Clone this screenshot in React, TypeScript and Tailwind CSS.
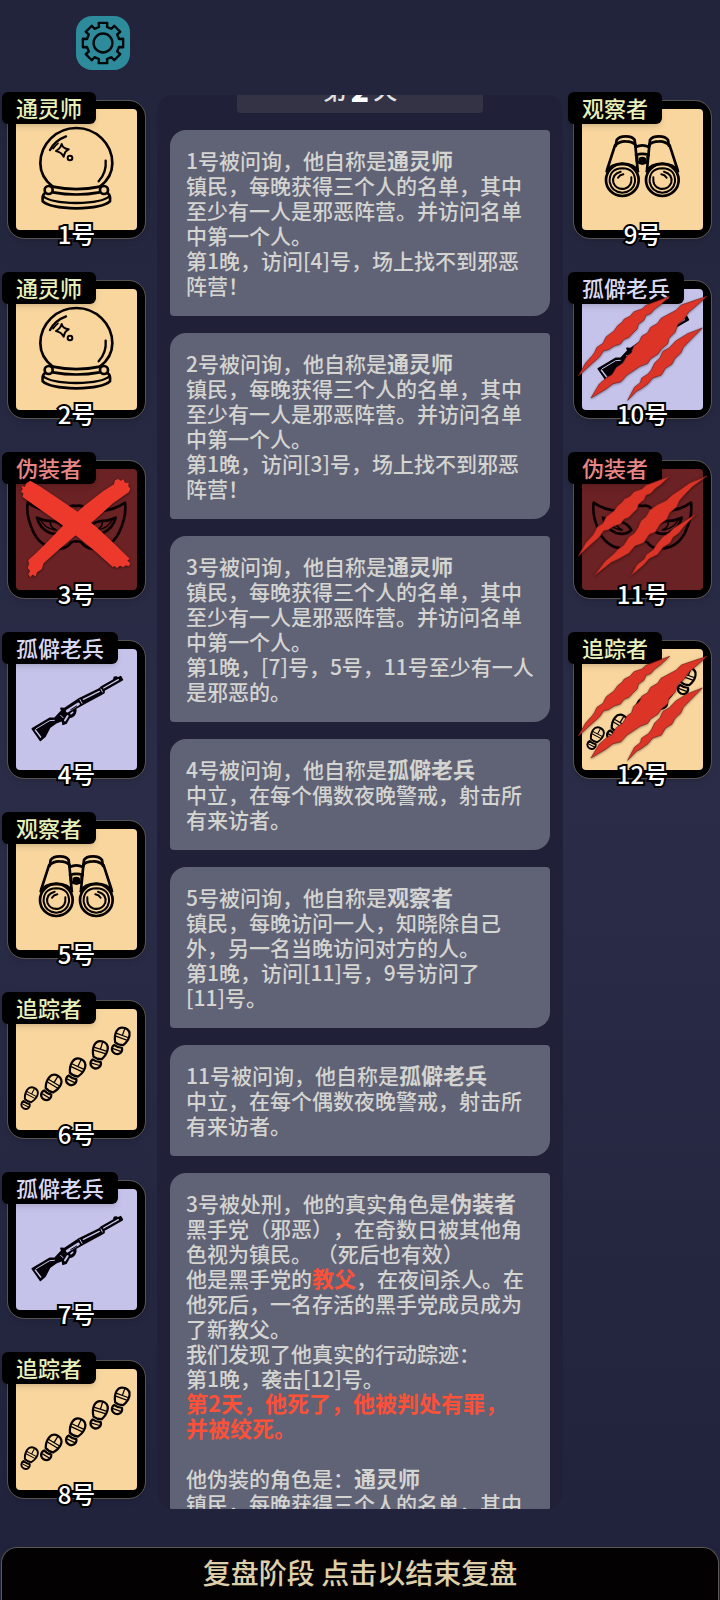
import type { ReactNode } from "react";
import clsx from "clsx";

type Role = "medium" | "disguiser" | "veteran" | "watcher" | "tracker";
type Mark = "executed" | "clawed" | "clawedLow";

type Player = {
  seat: number;
  role: Role;
  mark?: Mark;
};

const ROLES: Record<Role, { name: string; label: string; tile: string }> = {
  medium: { name: "通灵师", label: "text-[#e9efb9]", tile: "bg-[#f8d69e]" },
  disguiser: { name: "伪装者", label: "text-[#e88585]", tile: "bg-[#6a2224]" },
  veteran: { name: "孤僻老兵", label: "text-[#d9d8f3]", tile: "bg-[#c5c3ea]" },
  watcher: { name: "观察者", label: "text-[#e9efb9]", tile: "bg-[#f8d69e]" },
  tracker: { name: "追踪者", label: "text-[#e9efb9]", tile: "bg-[#f8d69e]" },
};

const LEFT: Player[] = [
  { seat: 1, role: "medium" },
  { seat: 2, role: "medium" },
  { seat: 3, role: "disguiser", mark: "executed" },
  { seat: 4, role: "veteran" },
  { seat: 5, role: "watcher" },
  { seat: 6, role: "tracker" },
  { seat: 7, role: "veteran" },
  { seat: 8, role: "tracker" },
];

const RIGHT: Player[] = [
  { seat: 9, role: "watcher" },
  { seat: 10, role: "veteran", mark: "clawed" },
  { seat: 11, role: "disguiser", mark: "clawedLow" },
  { seat: 12, role: "tracker", mark: "clawed" },
];

const MEDIUM_TEXT =
  "镇民，每晚获得三个人的名单，其中至少有一人是邪恶阵营。并访问名单中第一个人。";

function CrystalBall() {
  return (
    <g fill="none" stroke="#050000" strokeWidth={8} strokeLinecap="round" strokeLinejoin="round">
      <path d="M159 290 C136 272 122 248 122 220 A108 106 0 0 1 338 220 C338 248 324 272 301 290" />
      <path d="M159 290 Q230 305 301 290" />
      <path d="M160 307 Q230 320 300 307" />
      <circle cx={147} cy={300} r={12} />
      <circle cx={313} cy={300} r={12} />
      <path d="M135 310 Q127 316 129 334 Q150 354 230 355 Q310 354 331 334 Q333 316 325 310" />
      <path strokeWidth={7} d="M130 318 Q150 338 230 339 Q310 338 330 318" />
      <path strokeWidth={7} d="M151 180 Q165 152 199 139" />
      <path strokeWidth={5} d="M160 176 Q166 167 175 160" />
      <path strokeWidth={7} d="M318 212 Q321 248 297 274" />
      <path
        strokeWidth={6}
        d="M186 162 Q189 171 193 173 Q199 177 207 178 Q200 182 197 186 Q194 192 192 200 Q187 192 183 189 Q177 185 169 183 Q177 178 180 174 Q184 169 186 162 Z"
      />
      <circle cx={211} cy={204} r={7} strokeWidth={6} />
    </g>
  );
}

function BinocularHalf() {
  return (
    <>
      <path d="M150 168 L153 150 Q160 139 180 139 Q201 139 207 150 L209 168" />
      <path d="M149 166 Q162 153 180 154 Q200 154 209 164" />
      <path d="M148 166 L124 240 M209 166 L216 240" />
      <path d="M123 244 Q136 222 170 221 Q206 222 217 244" />
      <ellipse cx={170} cy={270} rx={49} ry={48} />
      <path strokeWidth={6} d="M132 276 Q130 236 170 235 Q210 236 208 276 Q202 306 170 308 Q138 306 132 276" />
      <path strokeWidth={6} d="M197 262 Q200 290 177 296 Q152 300 143 278 Q138 252 165 245 M157 263 Q162 255 173 253" />
    </>
  );
}

function Binoculars() {
  return (
    <g fill="none" stroke="#050000" strokeWidth={8} strokeLinecap="round" strokeLinejoin="round">
      <BinocularHalf />
      <g transform="translate(460 0) scale(-1 1)">
        <BinocularHalf />
      </g>
      <path d="M210 171 Q230 161 250 171 M211 195 Q230 188 249 195 M214 197 V214 Q230 228 246 214 V197" />
      <ellipse cx={230} cy={209} rx={9} ry={6} fill="#050000" strokeWidth={5} />
    </g>
  );
}

function Shotgun() {
  return (
    <g strokeLinecap="round" strokeLinejoin="round">
      <path
        fill="#050008"
        stroke="#050008"
        strokeWidth={5}
        d="M98 296 L151 265 L166 264 L187 242 L184 235 L194 236 L236 208 L299 177 L304 172 L342 150 L344 142 L351 141 L353 145 L363 140 L368 149 L313 181 L313 188 L305 193 L252 221 L228 235 L228 244 Q226 259 209 262 L199 280 L190 283 L188 271 L168 279 L150 292 L136 319 L122 331 Z"
      />
      <g fill="none" stroke="#c5c3ea" strokeWidth={4}>
        <path d="M107 300 L123 321" />
        <path strokeWidth={3} d="M110 296 L150 272 L164 271" />
        <path strokeWidth={9} d="M203 243 L236 222" />
        <path d="M251 208 L299 184 M312 174 L356 149" />
        <path strokeWidth={3} d="M241 209 L247 220 M304 177 L308 186 M183 256 L190 263" />
        <path strokeWidth={6} d="M196 271 L204 258" />
        <path strokeWidth={5} d="M214 251 L219 247" />
      </g>
      <path stroke="#050008" strokeWidth={3} d="M213 239 L231 228" />
    </g>
  );
}

const STEPS = [
  { x: 88, y: 325, angle: 28, size: 0.8 },
  { x: 153, y: 293, angle: 31, size: 0.95 },
  { x: 226, y: 246, angle: 25, size: 0.97 },
  { x: 296, y: 195, angle: 17, size: 0.97 },
  { x: 361, y: 153, angle: 20, size: 0.95 },
];

function Footprints() {
  return (
    <g fill="none" stroke="#050000" strokeWidth={7} strokeLinecap="round" strokeLinejoin="round">
      {STEPS.map((step) => (
        <g key={step.x} transform={`translate(${step.x} ${step.y}) rotate(${step.angle}) scale(${step.size})`}>
          <path d="M-13 9 C-25 -12 -27 -43 1 -44 C28 -43 27 -12 14 9 Q0 14 -13 9 Z" />
          <path d="M-13 18 Q0 23 13 18 C20 28 15 42 0 43 C-15 42 -20 28 -13 18 Z" />
          <path strokeWidth={4} d="M-18 -19 H20 M-18 -10 H19 M-12 30 H13 M1 -43 V-20" />
        </g>
      ))}
    </g>
  );
}

function MaskHalf() {
  return (
    <>
      <path d="M230 168 Q213 164 200 178 Q186 193 158 182 Q116 181 84 158 Q78 197 102 248 Q127 297 181 296 Q203 294 214 278 Q222 273 230 274" />
      <path d="M112 203 Q134 213 156 213 Q186 218 197 240 Q181 257 151 249 Q120 236 112 203 Z" />
      <path strokeWidth={5} d="M121 207 Q134 234 165 240 M152 215 Q150 232 170 240" />
    </>
  );
}

function Mask() {
  return (
    <g fill="none" stroke="#0d0203" strokeWidth={8} strokeLinecap="round" strokeLinejoin="round">
      <MaskHalf />
      <g transform="translate(460 0) scale(-1 1)">
        <MaskHalf />
      </g>
    </g>
  );
}

function RedCross() {
  return (
    <g fill="#ec392c" className="drop-shadow-[0_2px_3px_rgba(0,0,0,0.6)]">
      <path d="M92 92 L125 112 L170 142 L235 186 L291 232 L341 278 L390 326 L383 332 L392 340 L387 349 L378 346 L371 352 L361 347 L352 354 L344 348 L340 352 L290 307 L235 262 L175 216 L110 170 L69 141 L71 130 L64 126 L69 117 L65 108 L76 110 L80 100 Z" />
      <path d="M355 87 L364 92 L371 88 L376 98 L387 98 L386 109 L392 116 L388 126 L340 160 L288 207 L228 256 L172 304 L132 340 L126 358 L112 367 L108 379 L98 374 L92 382 L86 373 L91 363 L84 354 L88 343 L86 330 L104 314 L140 279 L203 214 L252 169 L310 124 L343 103 L346 91 Z" />
    </g>
  );
}

function Claws({ low }: { low?: boolean }) {
  return (
    <g
      fill="#dc3427"
      stroke="#81201c"
      strokeWidth={2}
      strokeLinejoin="round"
      className="drop-shadow-[0_2px_3px_rgba(0,0,0,0.5)]"
    >
      <path d="M38 318 L60 279 L80 257 L87 247 L94 232 L112 220 L122 200 L145 183 L156 167 L169 157 L176 147 L193 139 L205 125 L229 117 L241 106 L262 98 L312 79 L287 102 L266 118 L256 130 L241 136 L235 150 L218 163 L215 176 L201 190 L190 202 L175 208 L164 222 L145 228 L128 239 L114 242 L101 261 L75 284 Z" />
      {low ? (
        <>
          <path d="M86 377 L119 333 L143 313 L157 298 L174 286 L190 261 L207 249 L218 231 L226 212 L241 200 L252 181 L275 164 L301 152 L321 134 L348 116 L372 99 L424 78 L380 110 L354 137 L341 152 L333 171 L312 188 L304 207 L283 223 L269 246 L251 253 L234 278 L208 288 L189 310 L160 326 L137 337 Z" />
          <path d="M196 377 L214 344 L235 328 L243 313 L263 299 L273 282 L292 260 L310 249 L324 235 L394 190 L354 230 L340 249 L322 262 L313 279 L293 291 L275 314 L250 326 L234 345 Z" />
        </>
      ) : (
        <>
          <path d="M76 384 L101 342 L123 323 L139 314 L152 293 L171 280 L184 258 L198 248 L204 229 L221 215 L228 199 L246 188 L255 172 L276 160 L286 145 L310 132 L331 121 L347 105 L373 96 L424 79 L384 114 L368 127 L356 147 L337 163 L328 187 L310 205 L306 221 L288 236 L277 252 L255 266 L246 280 L223 289 L202 303 L184 315 L166 335 L142 341 L121 357 Z" />
          <path d="M186 391 L207 351 L224 338 L228 324 L247 312 L257 300 L267 279 L283 263 L292 244 L311 233 L330 213 L366 191 L410 174 L369 215 L353 232 L346 248 L328 265 L319 282 L299 295 L287 315 L261 324 L247 341 L225 357 L213 363 Z" />
        </>
      )}
    </g>
  );
}

const ICONS: Record<Role, ReactNode> = {
  medium: <CrystalBall />,
  disguiser: <Mask />,
  veteran: <Shotgun />,
  watcher: <Binoculars />,
  tracker: <Footprints />,
};

function CardLayer({ children }: { children: ReactNode }) {
  return (
    <svg viewBox="25 33 411 411" className="absolute -inset-2 size-[137px] overflow-visible" aria-hidden="true">
      {children}
    </svg>
  );
}

function PlayerCard({ player }: { player: Player }) {
  const role = ROLES[player.role];
  return (
    <button
      type="button"
      className="relative block size-[137px] rounded-2xl border-8 border-black bg-black shadow-md outline outline-[#57534f]"
    >
      <span className={clsx("block size-full rounded-sm", role.tile)} />
      <CardLayer>{ICONS[player.role]}</CardLayer>
      <span
        className={clsx(
          "absolute -top-[17px] -left-[14px] rounded-md bg-black px-[14px] pb-0.5 text-[22px] leading-[30px] font-medium whitespace-nowrap shadow-md",
          role.label,
        )}
      >
        {role.name}
      </span>
      {player.mark && (
        <CardLayer>
          {player.mark === "executed" ? <RedCross /> : <Claws low={player.mark === "clawedLow"} />}
        </CardLayer>
      )}
      <span className="absolute inset-x-0 -bottom-5 text-center text-2xl leading-8 font-medium text-white [-webkit-text-stroke:4px_#000] [paint-order:stroke_fill]">
        {player.seat}号
      </span>
    </button>
  );
}

function PlayerColumn({ players, className }: { players: Player[]; className: string }) {
  return (
    <ul className={clsx("flex w-[157px] shrink-0 flex-col gap-[43px] pt-1.5", className)}>
      {players.map((player) => (
        <li key={player.seat}>
          <PlayerCard player={player} />
        </li>
      ))}
    </ul>
  );
}

function Strong({ children }: { children: ReactNode }) {
  return <strong className="text-[22px] leading-none font-bold">{children}</strong>;
}

function Danger({ children }: { children: ReactNode }) {
  return <strong className="text-[22px] leading-none font-bold text-[#fb5138]">{children}</strong>;
}

function Message({ children }: { children: ReactNode }) {
  return (
    <article className="shrink-0 rounded-tl-2xl rounded-tr-sm rounded-br-2xl rounded-bl-sm bg-[#606276] px-4 py-[18px] text-[21px] leading-[25px] font-medium text-[#d4d4d0]">
      {children}
    </article>
  );
}

// Eight square teeth around the hub.
function gearPath() {
  const points: string[] = [];
  for (let i = 0; i < 8; i++) {
    const teeth = [
      [-14, 49],
      [-12, 61],
      [12, 61],
      [14, 49],
    ];
    for (const [offset, radius] of teeth) {
      const angle = ((i * 45 + offset) * Math.PI) / 180;
      points.push(`${(80 + radius * Math.sin(angle)).toFixed(1)} ${(80 - radius * Math.cos(angle)).toFixed(1)}`);
    }
  }
  return `M${points.join(" L")} Z`;
}

function SettingsButton() {
  return (
    <button type="button" aria-label="设置" className="size-[54px] rounded-2xl bg-[#2d8b9b]">
      <svg viewBox="0 0 160 160" className="size-full" fill="none" stroke="#04090c" strokeWidth={7} strokeLinejoin="round">
        <path d={gearPath()} />
        <circle cx={80} cy={80} r={28} />
      </svg>
    </button>
  );
}

export default function App() {
  return (
    <div className="flex h-screen flex-col overflow-hidden bg-linear-to-b from-[#21243b] via-[#2b2c47] to-[#20223b] font-['Noto_Sans_CJK_SC',sans-serif] [text-spacing-trim:space-all]">
      <header className="h-[95px] shrink-0 pt-4 pl-[76px]">
        <SettingsButton />
      </header>

      <main className="flex min-h-0 flex-1">
        <PlayerColumn players={LEFT} className="items-start pl-2" />

        <section
          aria-label="复盘记录"
          className="mb-[38px] flex min-w-0 flex-1 flex-col gap-[17px] overflow-hidden rounded-2xl bg-[#202139] px-[13px]"
        >
          <h2 className="-mt-[22px] flex h-10 w-[246px] shrink-0 items-center justify-center gap-1 self-center rounded-sm bg-[#343345] pb-2 text-2xl font-medium text-[#e2e2e0]">
            第<span className="text-[30px] font-black text-white">2</span>天
          </h2>

          <Message>
            <p>
              1号被问询，他自称是<Strong>通灵师</Strong>
            </p>
            <p>{MEDIUM_TEXT}</p>
            <p>第1晚，访问[4]号，场上找不到邪恶阵营！</p>
          </Message>
          <Message>
            <p>
              2号被问询，他自称是<Strong>通灵师</Strong>
            </p>
            <p>{MEDIUM_TEXT}</p>
            <p>第1晚，访问[3]号，场上找不到邪恶阵营！</p>
          </Message>
          <Message>
            <p>
              3号被问询，他自称是<Strong>通灵师</Strong>
            </p>
            <p>{MEDIUM_TEXT}</p>
            <p>第1晚，[7]号，5号，11号至少有一人是邪恶的。</p>
          </Message>
          <Message>
            <p>
              4号被问询，他自称是<Strong>孤僻老兵</Strong>
            </p>
            <p>中立，在每个偶数夜晚警戒，射击所有来访者。</p>
          </Message>
          <Message>
            <p>
              5号被问询，他自称是<Strong>观察者</Strong>
            </p>
            <p>镇民，每晚访问一人，知晓除自己外，另一名当晚访问对方的人。</p>
            <p>
              第1晚，访问[11]号，9号访问了<span className="inline-block">[11]号。</span>
            </p>
          </Message>
          <Message>
            <p>
              11号被问询，他自称是<Strong>孤僻老兵</Strong>
            </p>
            <p>中立，在每个偶数夜晚警戒，射击所有来访者。</p>
          </Message>
          <Message>
            <p>
              3号被处刑，他的真实角色是<Strong>伪装者</Strong>
            </p>
            <p>黑手党（邪恶），在奇数日被其他角色视为镇民。 （死后也有效）</p>
            <p>
              他是黑手党的<Danger>教父</Danger>，在夜间杀人。在他死后，一名存活的黑手党成员成为了新教父。
            </p>
            <p>我们发现了他真实的行动踪迹：</p>
            <p>第1晚，袭击[12]号。</p>
            <p>
              <Danger>
                第2天，他死了，他被判处有罪，
                <span className="whitespace-nowrap">并被绞死。</span>
              </Danger>
            </p>
            <p className="mt-[25px]">
              他伪装的角色是：<Strong>通灵师</Strong>
            </p>
            <p>{MEDIUM_TEXT}</p>
          </Message>
        </section>

        <PlayerColumn players={RIGHT} className="items-end pr-[9px]" />
      </main>

      <button
        type="button"
        className="mx-px h-[53px] shrink-0 rounded-t-2xl border border-b-0 border-[#5a5755] bg-[#030102] pb-1 text-[28px] leading-10 font-medium text-[#dccfa9]"
      >
        复盘阶段 点击以结束复盘
      </button>
    </div>
  );
}
